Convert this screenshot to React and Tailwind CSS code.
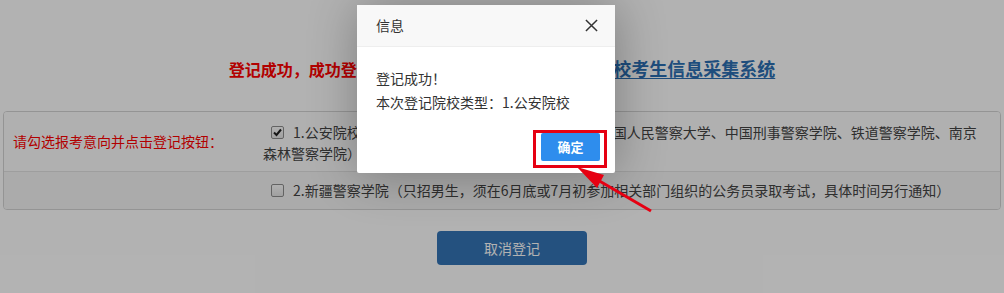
import React from "react";

function Box({ checked }) {
  return (
    <span className="inline-block align-middle w-[13px] h-[13px] border border-[#8f8f8f] rounded-[2px] bg-gradient-to-b from-[#fdfdfd] to-[#e6e6e6] relative -top-[2px]">
      {checked && (
        <svg viewBox="0 0 13 13" className="absolute -left-px -top-px w-[13px] h-[13px]">
          <path d="M3 6.5 L5.5 9 L10 3.5" fill="none" stroke="#222" strokeWidth="2" />
        </svg>
      )}
    </span>
  );
}

export default function App() {
  return (
    <div className="relative w-[1004px] h-[293px] overflow-hidden bg-white font-['Noto_Sans_CJK_SC',sans-serif] text-[#444] [text-spacing-trim:space-all]">
      {/* page */}
      <div className="pt-[55px] text-center font-bold leading-[26px] h-[111px]">
        <span className="text-[16px] text-[#ff0000]">登记成功，成功登记</span>
        <span className="text-[18px] text-[#2b6fb3] underline underline-offset-2">
          2019年新疆籍公安普通高等院校考生信息采集系统
        </span>
      </div>

      <div className="mx-[3px] border border-[#d4d4d4] rounded-[4px] overflow-hidden">
        <div className="flex bg-[#fdfdfd] border-b border-[#e2e2e2]">
          <div className="w-[259px] shrink-0 flex items-center pl-[9px] text-[14px] text-[#ff0000]">
            请勾选报考意向并点击登记按钮：
          </div>
          <div className="w-[716px] shrink-0 pt-[10px] pb-[7px] text-[14px] leading-[21px] text-[#444]">
            <span className="ml-[8px]">
              <Box checked />
            </span>
            <span className="ml-[9px]">
              1.公安院校（中国人民公安大学、北京警察学院、中国人民警察大学、中国刑事警察学院、铁道警察学院、南京森林警察学院）
            </span>
          </div>
        </div>
        <div className="flex bg-[#f5f5f5]">
          <div className="w-[259px] shrink-0" />
          <div className="py-[8px] text-[14px] leading-[21px] pl-[8px]">
            <Box />
            <span className="ml-[9px]">
              2.新疆警察学院（只招男生，须在6月底或7月初参加相关部门组织的公务员录取考试，具体时间另行通知）
            </span>
          </div>
        </div>
      </div>

      <button className="block ml-[437px] mt-[21px] w-[150px] h-[34px] rounded-[4px] bg-[#3475b6] text-white text-[14px]">
        取消登记
      </button>

      {/* shade */}
      <div className="absolute inset-0 bg-black/30" />

      {/* dialog */}
      <div className="absolute left-[357px] top-[5px] w-[258px] bg-white rounded-[2px] shadow-[1px_1px_50px_rgba(0,0,0,0.3)]">
        <div className="h-[42px] flex items-center justify-between pl-[19px] pr-[17px] bg-[#f8f8f8] border-b border-[#eee] text-[14px] text-[#333]">
          <span>信息</span>
          <svg viewBox="0 0 14 14" className="w-[13px] h-[13px]">
            <path d="M1 1 L13 13 M13 1 L1 13" stroke="#333" strokeWidth="1.6" />
          </svg>
        </div>
        <div className="px-[19px] pt-[19px] pb-[19px] text-[14px] leading-[24px] text-[#333]">
          <div>登记成功！</div>
          <div>本次登记院校类型：1.公安院校</div>
        </div>
        <div className="flex justify-end pr-[15px] pb-[12px]">
          <div className="w-[59px] h-[28px] rounded-[2px] bg-[#2e8ded] text-white text-[13px] font-bold flex items-center justify-center">
            确定
          </div>
        </div>
      </div>

      {/* annotation */}
      <div className="absolute left-[533px] top-[130px] w-[74px] h-[38px] border-[3px] border-[#e60012]" />
      <svg className="absolute left-0 top-0" width="1004" height="293">
        <line x1="651" y1="211" x2="596" y2="179" stroke="#e60012" strokeWidth="3" />
        <polygon points="577,167 604,175 597,188" fill="#e60012" />
      </svg>
    </div>
  );
}
